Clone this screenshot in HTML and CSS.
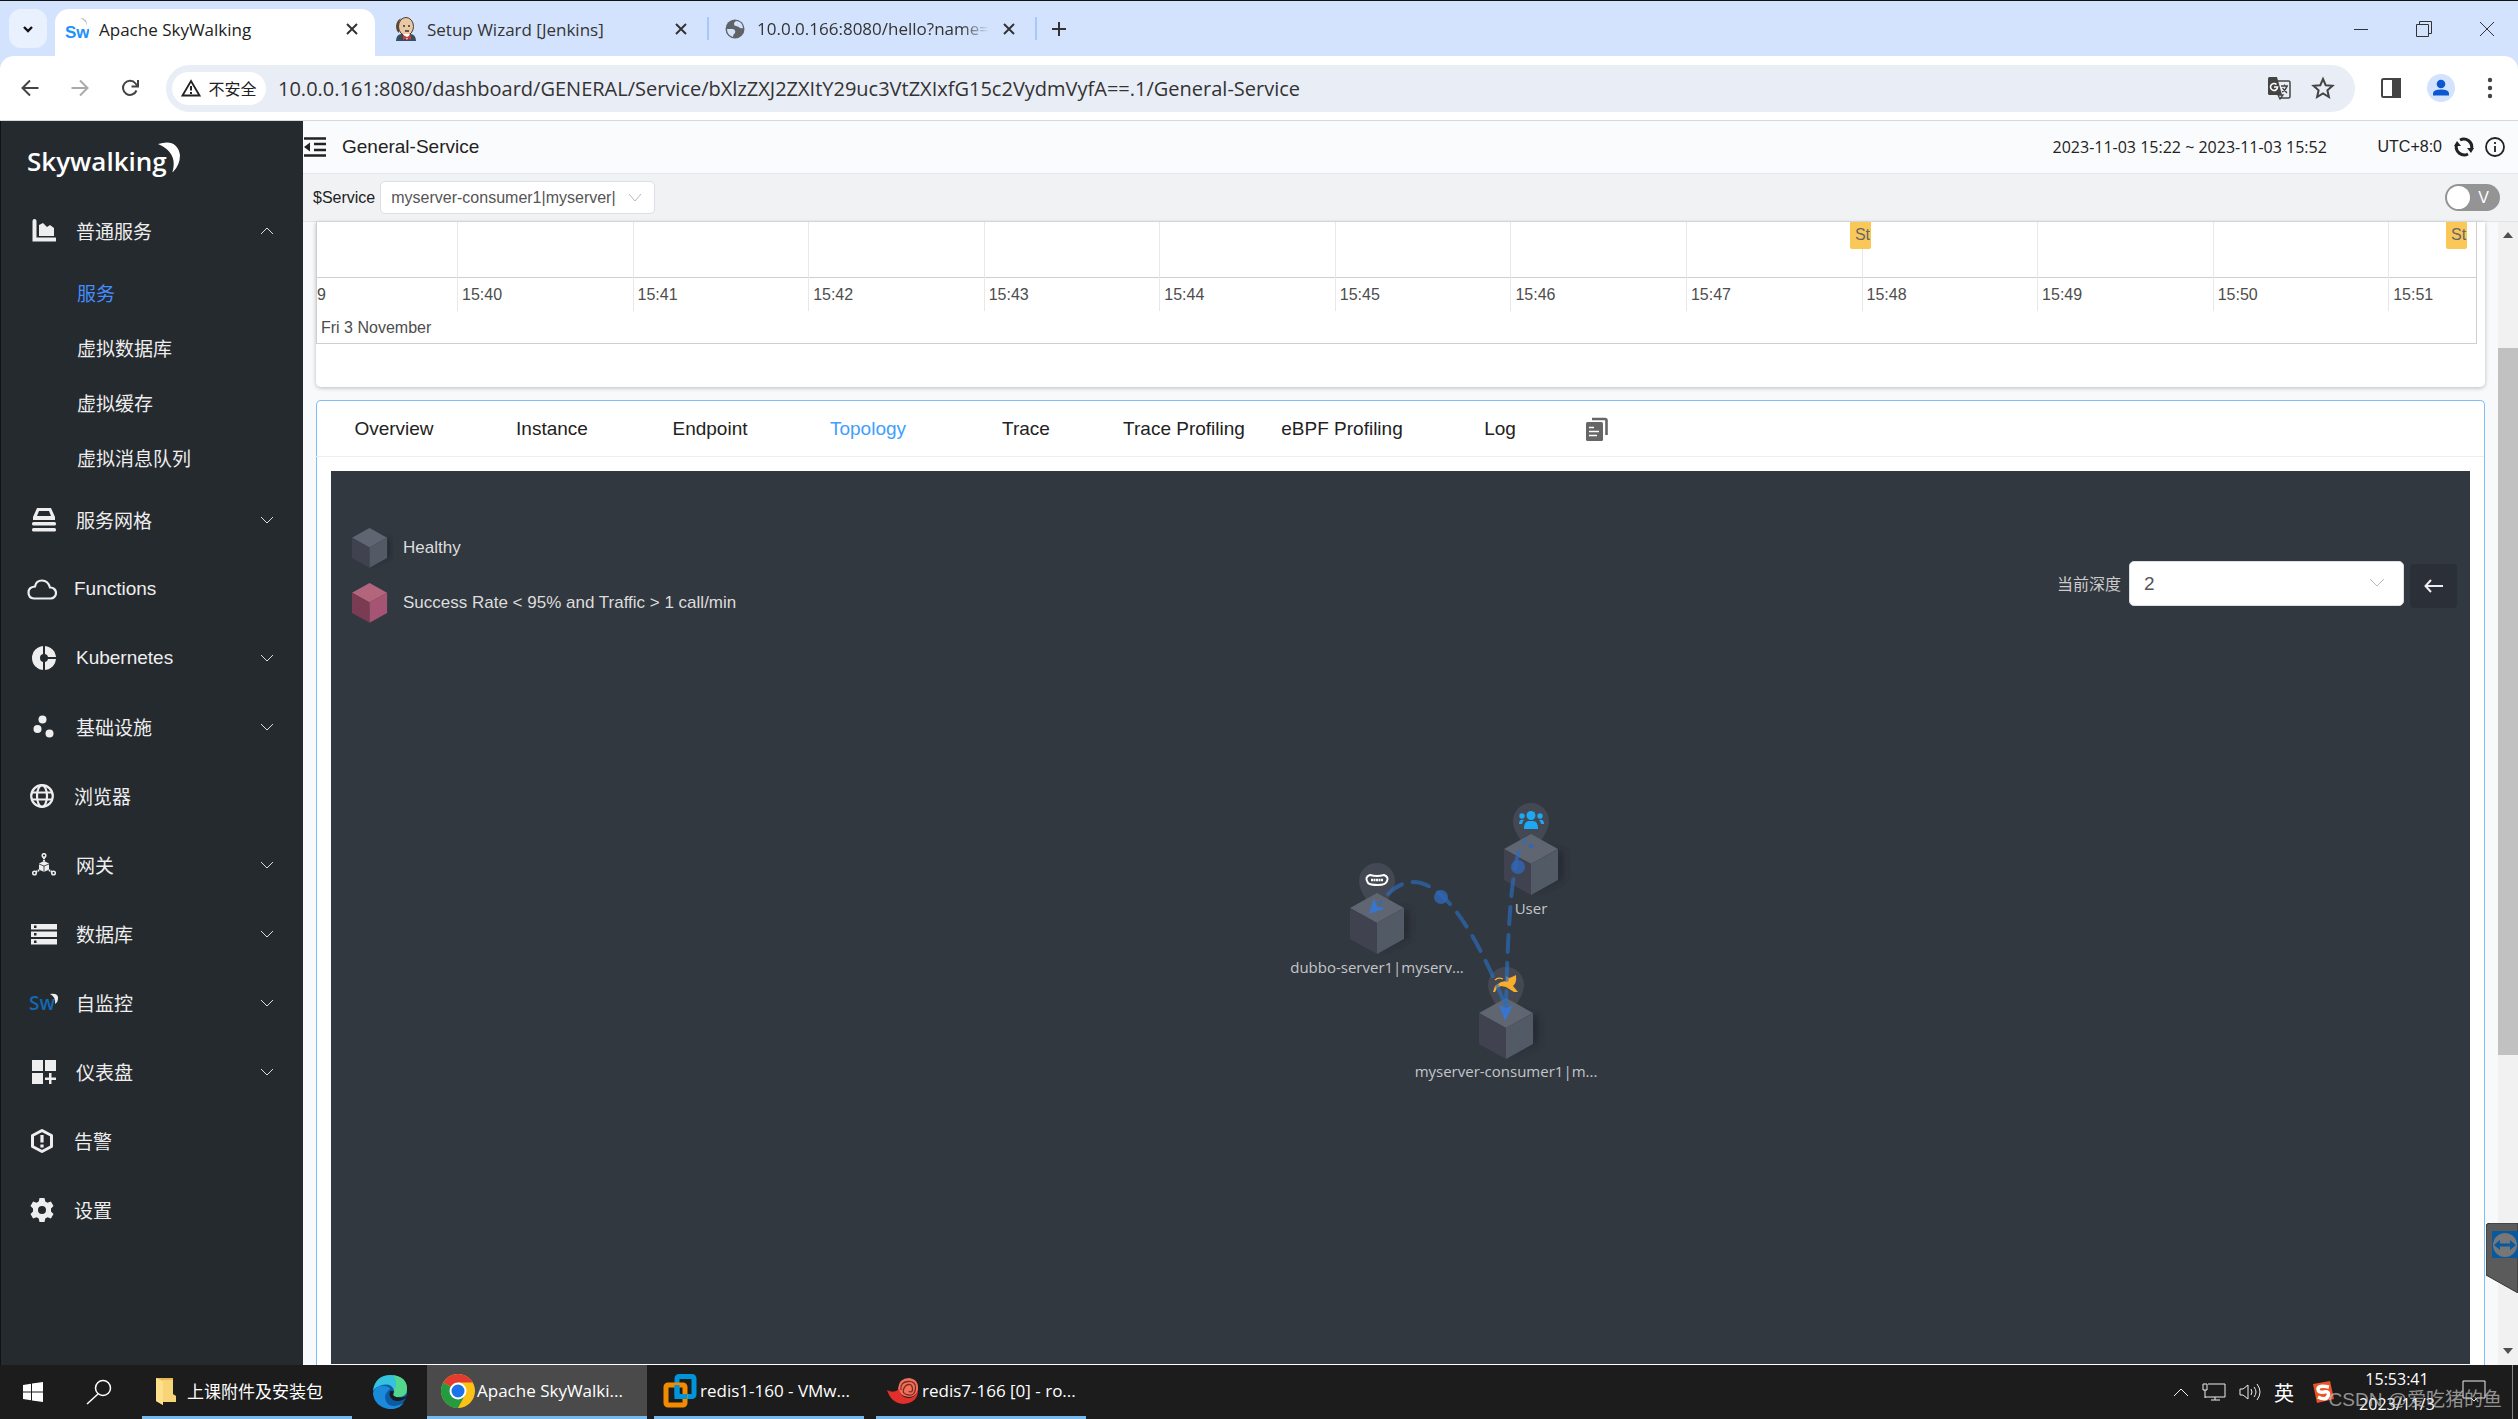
FILE: index.html
```html
<!DOCTYPE html>
<html lang="zh-CN">
<head>
  <meta charset="UTF-8">
  <meta name="viewport" content="width=device-width, initial-scale=1.0">
  <title>Apache SkyWalking</title>
  <link rel="stylesheet" href="styles.css">
</head>
<body>
  <!-- Browser tabs -->
  <div class="tab-strip">
    <button class="tab-search" aria-label="Search tabs"><svg width="14" height="14" viewBox="0 0 14 14"><path d="M3 5l4 4 4-4" fill="none" stroke="#111" stroke-width="2.4"/></svg></button>
    <div class="tab active">
      <svg width="24" height="24" viewBox="0 0 24 24"><text x="0" y="21" class="sw-text" fill="#1e90ff">Sw</text><path d="M15 1q8 0 7 9 0-6-7-9z" fill="#bbb"/></svg>
      <span class="tab-title">Apache SkyWalking</span>
      <button class="tab-close" aria-label="Close tab"><svg width="12" height="12" viewBox="0 0 12 12"><path d="M1 1l10 10M11 1L1 11"/></svg></button>
    </div>
    <div class="tab">
      <svg width="22" height="24" viewBox="0 0 22 24"><path d="M1 24q0-6 5-7l10 0q5 1 5 7z" fill="#33505f"/><ellipse cx="11" cy="9.500" rx="7.500" ry="9" fill="#e8c9a4" stroke="#4b3a2c"/><path d="M4 12q-1-9 3-11-5 1-6 8 0 5 3 7z" fill="#5a4534"/><path d="M8 9h2M13 9h2M10 14h4" stroke="#333" stroke-width="1.300"/><path d="M8 17l7 0-3 6z" fill="#fff"/><path d="M8 18l4 2 4-2v5l-4-2-4 2z" fill="#d33"/></svg>
      <span class="tab-title">Setup Wizard [Jenkins]</span>
      <button class="tab-close" aria-label="Close tab"><svg width="12" height="12" viewBox="0 0 12 12"><path d="M1 1l10 10M11 1L1 11"/></svg></button>
    </div>
    <div class="tab">
      <svg width="20" height="20" viewBox="0 0 20 20"><circle cx="10" cy="10" r="9.500" fill="#5f6368"/><path d="M11 2q6 0 7 7-3 1-4-1l-3-1q-2 0-2-2 0-2 2-3zM2 10l6 0q3 1 2 4-2 1-2 4-6-2-6-8z" fill="#d3e3fd"/></svg>
      <span class="tab-title fade">10.0.0.166:8080/hello?name=</span>
      <button class="tab-close" aria-label="Close tab"><svg width="12" height="12" viewBox="0 0 12 12"><path d="M1 1l10 10M11 1L1 11"/></svg></button>
    </div>
    <button class="tab-new" aria-label="New tab"><svg width="14" height="14" viewBox="0 0 14 14"><path d="M7 0v14M0 7h14" stroke="#333" stroke-width="2"/></svg></button>
    <div class="window-buttons">
      <button aria-label="Minimize"><svg width="16" height="16" viewBox="0 0 16 16"><path d="M1 8.500h14"/></svg></button>
      <button aria-label="Restore"><svg width="16" height="16" viewBox="0 0 16 16"><path d="M.5 3.500h12v12h-12zM3.500 3V.5h12v12H13"/></svg></button>
      <button aria-label="Close"><svg width="16" height="16" viewBox="0 0 16 16"><path d="M1 1l14 14M15 1L1 15"/></svg></button>
    </div>
  </div>

  <!-- Address bar -->
  <div class="toolbar">
    <button aria-label="Back"><svg width="18" height="18" viewBox="0 0 18 18"><path d="M17.500 9H2M9 1.500L1.500 9 9 16.500"/></svg></button>
    <button aria-label="Forward" class="off"><svg width="18" height="18" viewBox="0 0 18 18"><path d="M.5 9H16M9 1.500L16.500 9 9 16.500"/></svg></button>
    <button aria-label="Reload"><svg width="18" height="18" viewBox="0 0 18 18"><path d="M15.500 11.500A7 7 0 1 1 14.500 4.500L16.500 7M17 1v6.500h-6.500"/></svg></button>
    <div class="omnibox">
      <button class="site-chip"><svg width="20" height="18" viewBox="0 0 20 18"><path d="M10 2L18.500 16.500h-17z" fill="none" stroke="#222" stroke-width="1.800"/><path d="M10 7v4.500M10 13v2" stroke="#222" stroke-width="2"/></svg>不安全</button>
      <input class="url" type="text" aria-label="Address" value="10.0.0.161:8080/dashboard/GENERAL/Service/bXlzZXJ2ZXItY29uc3VtZXIxfG15c2VydmVyfA==.1/General-Service">
      <button aria-label="Translate"><svg width="24" height="24" viewBox="0 0 24 24"><path d="M10 5h11.500q1.500 0 1.500 1.500v14q0 1.500-1.500 1.500H13" fill="none" stroke="#444" stroke-width="1.500"/><path d="M2.500 1H10l5 18H2.500Q1 19 1 17.500v-15Q1 1 2.500 1z" fill="#444"/><path d="M9.500 8.500A3.500 3.500 0 1 0 10.500 11H7" fill="none" stroke="#fff" stroke-width="1.600"/><path d="M14 10h7M17.500 8.500V10M20 10q-1 4-5 6M15.500 12l4.500 5M11 19l5 0-3 4z" fill="none" stroke="#444" stroke-width="1.300"/></svg></button>
      <button aria-label="Bookmark"><svg width="24" height="24" viewBox="0 0 24 24"><path d="M12 3l2.700 6.200 6.800.6-5.100 4.500 1.500 6.700-5.900-3.600-5.900 3.600 1.500-6.700L2.500 9.800l6.800-.6z" fill="none" stroke="#444" stroke-width="2"/></svg></button>
    </div>
    <button aria-label="Side panel" class="side-btn"><svg width="20" height="20" viewBox="0 0 20 20"><rect x="1" y="1" width="18" height="18" rx="1.500" fill="#fff" stroke="#444" stroke-width="2"/><path d="M12 1h7v18h-7z" fill="#444"/></svg></button>
    <button aria-label="Profile" class="profile"><svg width="28" height="28" viewBox="0 0 28 28"><circle cx="14" cy="14" r="14" fill="#d3e3fd"/><circle cx="14" cy="10" r="4.300" fill="#0b57d0"/><path d="M6 21.500v-2q0-4 8-4t8 4v2z" fill="#0b57d0"/></svg></button>
    <button aria-label="Menu" class="kebab"><svg width="6" height="22" viewBox="0 0 6 22"><circle cx="3" cy="3" r="2.200"/><circle cx="3" cy="11" r="2.200"/><circle cx="3" cy="19" r="2.200"/></svg></button>
  </div>

  <div class="app">
    <!-- Side menu -->
    <nav class="sidebar">
      <div class="logo">
        <svg width="160" height="50" viewBox="0 0 160 50"><text x="0" y="30" class="logo-text">Skywalking</text><path d="M131 3Q150-3 153 14q0 10-7 17-1 0 0-2 4-18-15-26z" fill="#fff"/></svg>
      </div>
      <a href="#" class="item">
        <svg viewBox="0 0 24 24"><path d="M2.500 2v18.500H23" fill="none" stroke="#eee" stroke-width="4" stroke-linecap="round"/><path d="M7 17V6l4-2 4 4 3-2 4 3v8z"/></svg>
        普通服务<svg class="arrow" viewBox="0 0 14 8"><path d="M1 7l6-6 6 6"/></svg></a>
      <a href="#" class="sub current">服务</a>
      <a href="#" class="sub">虚拟数据库</a>
      <a href="#" class="sub">虚拟缓存</a>
      <a href="#" class="sub">虚拟消息队列</a>
      <a href="#" class="item">
        <svg viewBox="0 0 24 24"><path d="M5 0h14l4 9v3H1V9zM7 3L5 8h14l-2-5z" fill-rule="evenodd"/><rect x="0" y="14" width="24" height="3.500" rx="1.500"/><rect x="0" y="20" width="24" height="3.500" rx="1.500"/></svg>
        服务网格<svg class="arrow" viewBox="0 0 14 8"><path d="M1 1l6 6 6-6"/></svg></a>
      <a href="#" class="item single">
        <svg class="wide" viewBox="0 0 30 24"><path d="M7 21.500h16.500a5.500 5.500 0 0 0 0-11h-.5Q21 3.500 15 3.500T8 9.500Q1.500 10 1.500 15.500 1.500 21 7 21.500z" fill="none" stroke="#eee" stroke-width="2.200"/></svg>
        Functions</a>
      <a href="#" class="item">
        <svg viewBox="0 0 24 24"><circle cx="12" cy="12" r="12"/><path d="M12 0v24M12 12h12" stroke="#252a2f" stroke-width="2"/><circle cx="12" cy="12" r="4" fill="#252a2f"/></svg>
        Kubernetes<svg class="arrow" viewBox="0 0 14 8"><path d="M1 1l6 6 6-6"/></svg></a>
      <a href="#" class="item">
        <svg viewBox="0 0 24 24"><circle cx="10.500" cy="4.500" r="4"/><circle cx="5.500" cy="14" r="4"/><circle cx="17.500" cy="18.500" r="4"/></svg>
        基础设施<svg class="arrow" viewBox="0 0 14 8"><path d="M1 1l6 6 6-6"/></svg></a>
      <a href="#" class="item single">
        <svg viewBox="0 0 24 24"><g fill="none" stroke="#eee" stroke-width="2.200"><circle cx="12" cy="12" r="10.800"/><ellipse cx="12" cy="12" rx="5" ry="10.800"/><path d="M2 8.500h20M2 15.500h20"/></g></svg>
        浏览器</a>
      <a href="#" class="item">
        <svg viewBox="0 0 24 24"><path d="M12 8l5 2.500v6L12 19l-5-2.500v-6z"/><path d="M7 11l5 2 5-2M12 13v6" fill="none" stroke="#252a2f" stroke-width=".8"/><g fill="none" stroke="#eee" stroke-width="1.500"><circle cx="12" cy="2.500" r="1.800"/><circle cx="2.500" cy="20" r="1.800"/><circle cx="21.500" cy="20" r="1.800"/><path d="M12 4.500V8M4 19l4-2.500M20 19l-4-2.500" stroke-width="2" stroke-dasharray="1.500 .7"/></g></svg>
        网关<svg class="arrow" viewBox="0 0 14 8"><path d="M1 1l6 6 6-6"/></svg></a>
      <a href="#" class="item">
        <svg class="mid" viewBox="0 0 26 24"><path d="M0 2h26v5.500H0zM0 9.500h26V15H0zM0 17h26v5.500H0z"/><path d="M3 3.500h2.500V6H3zM3 11h2.500v2.500H3zM3 18.500h2.500V21H3z" fill="#252a2f"/></svg>
        数据库<svg class="arrow" viewBox="0 0 14 8"><path d="M1 1l6 6 6-6"/></svg></a>
      <a href="#" class="item">
        <svg class="wide" viewBox="0 0 30 24"><text x="0" y="19" class="sw-menu">Sw</text><path d="M21 3q9-1 8 5 0 3-3 5 1-7-5-10z"/></svg>
        自监控<svg class="arrow" viewBox="0 0 14 8"><path d="M1 1l6 6 6-6"/></svg></a>
      <a href="#" class="item">
        <svg viewBox="0 0 24 24"><path d="M0 0h11v11H0zM13 0h11v11H13zM0 13h11v11H0zM17 13h2.500v4.500H24V20h-4.500v4H17v-4h-4v-2.500h4z"/></svg>
        仪表盘<svg class="arrow" viewBox="0 0 14 8"><path d="M1 1l6 6 6-6"/></svg></a>
      <a href="#" class="item single">
        <svg viewBox="0 0 24 24"><path d="M12 1.500l9.500 5v11l-9.500 5-9.500-5v-11z" fill="none" stroke="#eee" stroke-width="3" stroke-linejoin="round"/><path d="M12 6v7.500M12 15.500v3" stroke="#eee" stroke-width="3.200"/></svg>
        告警</a>
      <a href="#" class="item single">
        <svg viewBox="0 0 24 24"><path d="M9.500 0h5l.8 3.600 2.200 1.200 3.400-1.200 2.600 4.300L21 10.500v3l2.500 2.600-2.600 4.300-3.400-1.200-2.200 1.200-.8 3.600h-5l-.8-3.600-2.200-1.200-3.400 1.200L.5 16.100 3 13.500v-3L.5 7.900l2.600-4.300 3.400 1.200 2.200-1.200zM12 8a4 4 0 1 0 0 8 4 4 0 0 0 0-8z" fill-rule="evenodd"/></svg>
        设置</a>
    </nav>

    <main class="main">
      <header class="app-header">
        <button aria-label="Collapse menu"><svg width="22" height="20" viewBox="0 0 22 20"><path d="M0 1.500h22M10 7h12M10 13h12M0 18.500h22" stroke="#222" stroke-width="2.600"/><path d="M0 10l6-4.500v9z" fill="#222"/></svg></button>
        <h1>General-Service</h1>
        <input class="time-range" type="text" aria-label="Time range" value="2023-11-03 15:22 ~ 2023-11-03 15:52">
        <span class="utc">UTC+8:0</span>
        <button aria-label="Refresh" class="refresh"><svg width="20" height="20" viewBox="0 0 20 20"><g fill="none" stroke="#222" stroke-width="3"><path d="M6 3A8 8 0 0 1 17.500 12"/><path d="M14 17A8 8 0 0 1 2.500 8"/></g><path d="M13 11h7l-3 5zM0 9l3-5 4 5z" fill="#222"/></svg></button>
        <button aria-label="About"><svg width="20" height="20" viewBox="0 0 20 20"><circle cx="10" cy="10" r="9" fill="none" stroke="#222" stroke-width="1.800"/><path d="M10 5v2M10 9v6" stroke="#222" stroke-width="1.800"/></svg></button>
      </header>

      <div class="filters">
        <label for="service">$Service</label>
        <div class="select-box service-box">
          <select id="service"><option>myserver-consumer1|myserver|</option></select>
          <svg width="14" height="10" viewBox="0 0 14 10"><path d="M1 1l6 7 6-7"/></svg>
        </div>
        <label class="switch"><input type="checkbox" aria-label="View mode"><span>V</span></label>
      </div>

      <div class="board">
        <div class="cards">
          <section class="card event-card">
            <div class="timeline">
              <div class="ticks">
                <span class="first">9</span><span>15:40</span><span>15:41</span><span>15:42</span><span>15:43</span><span>15:44</span><span>15:45</span><span>15:46</span><span>15:47</span><span>15:48</span><span>15:49</span><span>15:50</span><span>15:51</span>
              </div>
              <p>Fri 3 November</p>
              <span class="event event-a">St</span>
              <span class="event event-b">St</span>
            </div>
          </section>

          <section class="card tab-card">
            <div class="tabs">
              <button>Overview</button>
              <button>Instance</button>
              <button>Endpoint</button>
              <button class="active">Topology</button>
              <button>Trace</button>
              <button>Trace Profiling</button>
              <button>eBPF Profiling</button>
              <button>Log</button>
              <button class="copy" aria-label="Copy"><svg width="22" height="24" viewBox="0 0 22 24"><path d="M6 2h13q1.500 0 1.500 1.500V18" fill="none" stroke="#666" stroke-width="2.600"/><path d="M1.500 5h14q1.500 0 1.500 1.500v16q0 1.500-1.500 1.500h-14Q0 24 0 22.500v-16Q0 5 1.500 5z" fill="#666"/><path d="M3 10.500h5M3 14.500h10M3 18.500h8" stroke="#fff" stroke-width="1.600"/></svg></button>
            </div>

            <div class="topology">
              <ul class="legend">
                <li><svg width="42" height="40" viewBox="0 0 42 40"><use href="#cube" transform="scale(.65)"/></svg>Healthy</li>
                <li><svg width="42" height="40" viewBox="0 0 42 40"><g transform="scale(.65)"><path d="M27 0l27 15-27 15L0 15z" fill="#b3657c"/><path d="M0 15l27 15v31L0 46z" fill="#7b3b52"/><path d="M54 15L27 30v31l27-15z" fill="#a55573"/></g></svg>Success Rate &lt; 95% and Traffic &gt; 1 call/min</li>
              </ul>

              <div class="depth">
                <label for="depth">当前深度</label>
                <div class="select-box depth-box">
                  <select id="depth"><option>2</option></select>
                  <svg width="16" height="10" viewBox="0 0 16 10"><path d="M1 1l7 7 7-7"/></svg>
                </div>
                <button aria-label="Back to list"><svg width="20" height="14" viewBox="0 0 20 14"><path d="M19 7H2M7 1L1.500 7 7 13" fill="none" stroke="#eee" stroke-width="2"/></svg></button>
              </div>

              <!-- Service map -->
              <svg class="graph" width="380" height="320" viewBox="0 0 380 320">
                <defs>
                  <filter id="soft" x="-50%" y="-50%" width="200%" height="200%"><feGaussianBlur stdDeviation="3"/></filter>
                  <g id="cube">
                    <path d="M34 14l26 3v28l-28 12z" fill="#22262d" opacity=".7" filter="url(#soft)"/>
                    <path d="M27 0l27 15-27 15L0 15z" fill="#5f6672"/>
                    <path d="M0 15l27 15v31L0 46z" fill="#404250"/>
                    <path d="M54 15L27 30v31l27-15z" fill="#515a65"/>
                  </g>
                  <path id="pin" d="M0 32Q-18 12-18 0a18 18 0 0 1 36 0q0 12-18 32z" fill="#444852"/>
                </defs>
                <use href="#pin" x="117" y="101"/>
                <use href="#cube" x="90" y="113"/>
                <use href="#pin" x="271" y="41"/>
                <use href="#cube" x="244" y="54"/>
                <use href="#pin" x="246" y="205"/>
                <use href="#cube" x="219" y="218"/>
                <path d="M110 95q7 2 14 0 5 2 3 6-1 4-9 4t-10-2q-4-6 2-8z" fill="none" stroke="#fff" stroke-width="2"/>
                <path d="M111 100h12" stroke="#fff" stroke-width="2.500" stroke-dasharray="2 .5"/>
                <g fill="#1da8f2">
                  <circle cx="271" cy="35.500" r="4.500"/><circle cx="262" cy="36" r="2.700"/><circle cx="280" cy="36" r="2.700"/>
                  <path d="M264 49q0-8 5-8h4q5 0 5 8zM259 44q0-5 5-4-2 2-2 4zM284 44q0-5-5-4 2 2 2 4z"/>
                </g>
                <path d="M246 196l3 2 3-1 4-2q1 8-3 11l5 6h-4l-8-5-5-1-4 2-2 4h-2l2-6 6-4 5-1z" fill="#f9ae2b"/>
                <path d="M235 200q3-3 8-1" fill="none" stroke="#f9ae2b" stroke-width="1.300"/>
                <g fill="none" stroke="#2a6dc0" stroke-opacity=".65" stroke-width="4" stroke-linecap="round" stroke-dasharray="17 11">
                  <path d="M244 222Q174 52 120 123"/>
                  <path d="M246 228Q249 71 265 61"/>
                </g>
                <path d="M109 134l5-16 3 9 9 1zM245 241l-6-16 7 3 7-3z" fill="#3676cf"/>
                <g fill="#2f67b5" fill-opacity=".8"><circle cx="181" cy="117" r="7"/><circle cx="258" cy="87" r="7"/><circle cx="271" cy="66" r="2.500"/></g>
                <g class="node-label">
                  <text x="117" y="193">dubbo-server1|myserv...</text>
                  <text x="271" y="134">User</text>
                  <text x="246" y="297">myserver-consumer1|m...</text>
                </g>
              </svg>
            </div>
          </section>
        </div>
        <div class="scrollbar">
          <svg width="10" height="6" viewBox="0 0 10 6"><path d="M5 0l5 6H0z"/></svg>
          <div class="thumb"></div>
          <svg width="10" height="6" viewBox="0 0 10 6"><path d="M5 6L0 0h10z"/></svg>
        </div>
      </div>
    </main>
  </div>

  <!-- TeamViewer side handle -->
  <svg class="remote-handle" width="32" height="70" viewBox="0 0 32 70"><path d="M4 0h28v70L0 52V4Q0 0 4 0z" fill="#5b5b5b" stroke="#333"/><path d="M6 8h26v27H6z" fill="#08599d"/><circle cx="19" cy="22" r="12" fill="#777"/><path d="M8 22l6-5v3.500h10V17l6 5-6 5v-3.500H14V27z" fill="#08599d"/></svg>

  <!-- Windows taskbar -->
  <footer class="taskbar">
    <button class="start" aria-label="Start"><svg width="20" height="20" viewBox="0 0 20 20" fill="#fff"><path d="M0 3l8-1.200v7.700H0zM9 1.600L20 0v9.500H9zM0 10.500h8v7.700L0 17zM9 10.500h11V20L9 18.400z"/></svg></button>
    <button class="search" aria-label="Search"><svg width="26" height="26" viewBox="0 0 26 26" fill="none" stroke="#fff" stroke-width="1.500"><circle cx="17" cy="9" r="7.500"/><path d="M12 15L1 25"/></svg></button>
    <button class="task folder"><svg width="20" height="28" viewBox="0 0 20 28"><path d="M0 1h17v16l3 2v6H7v3L0 24z" fill="#e9b94f"/><path d="M0 1l7 3v24l-7-4z" fill="#ffe08a"/><path d="M7 3h10v15l3 1v6H7z" fill="#f6d477"/></svg>上课附件及安装包</button>
    <button class="edge" aria-label="Edge"><svg width="34" height="34" viewBox="0 0 34 34"><circle cx="17" cy="17" r="17" fill="#0c59a4"/><path d="M0 16Q2 0 18 0q16 1 16 14 0 8-9 8-4 0-5-2 2-2 1-5Q18 8 9 10 2 12 0 16z" fill="#35c1e0"/><path d="M20 0q14 2 14 14 0 8-9 8-4 0-5-2 2-2 1-5 5-7-1-15z" fill="#5fdc70" opacity=".75"/><path d="M0 18Q3 9 12 11q5 1 5 3-8 6-3 14 5 6 17 0-6 7-15 6Q1 31 0 18z" fill="#1b8ad8"/><path d="M34 22q-7 6-14 3-5-4-3-9l4 0q-2 3 0 5 5 3 13 0z" fill="#1c1c1c"/></svg></button>
    <button class="task on"><svg width="34" height="34" viewBox="0 0 34 34"><circle cx="17" cy="17" r="17" fill="#fbc116"/><path d="M17 17L2.300 8.500a17 17 0 0 1 29.400 0z" fill="#e33b2e"/><path d="M17 17L2.300 8.500A17 17 0 0 0 17 34l7-13z" fill="#249a41"/><path d="M17 8.500h14.700L24 21z" fill="#fbc116"/><circle cx="17" cy="17" r="8.500" fill="#fff"/><circle cx="17" cy="17" r="6.500" fill="#1a73e8"/></svg>Apache SkyWalki...</button>
    <button class="task"><svg width="34" height="34" viewBox="0 0 34 34" fill="none" stroke-width="5"><rect x="14" y="2.500" width="17" height="20" rx="2" stroke="#0095d9"/><rect x="3" y="11" width="19" height="20" rx="2" stroke="#f38b00"/><path d="M14 11v11.500h10" stroke="#0095d9"/></svg>redis1-160 - VMw...</button>
    <button class="task redis"><svg width="32" height="26" viewBox="0 0 32 26"><path d="M11 11Q12 0 22 0q10 1 9 12-2 7-9 7-9-1-11-8z" fill="#f0705a"/><path d="M0 12q7 4 12-1 2 9 10 9 6 0 9-8 0 13-15 14Q4 25 0 12z" fill="#e32f2b"/><path d="M14 12Q13 4 21 3.500t7.500 7-7 6.500-5-5.500 5-5 4 4-4 3" fill="none" stroke="#7c2a22" stroke-width="1.300"/></svg>redis7-166 [0] - ro...</button>
    <div class="tray">
      <svg width="16" height="10" viewBox="0 0 16 10"><path d="M1 9l7-7 7 7"/></svg>
      <svg width="24" height="18" viewBox="0 0 24 18"><path d="M6 1h17v13H3M1 1h4v6H1zM3 7v8M9 17h9M13 14v3"/></svg>
      <svg width="22" height="18" viewBox="0 0 22 18"><path d="M1 6h3l5-4v14l-5-4H1zM12 6q2 3 0 6M15 4q4 5 0 10M18 1q6 8 0 16"/></svg>
      <span class="ime">英</span>
      <svg class="sogou" width="22" height="22" viewBox="0 0 22 22"><path d="M1 3l17-3 4 18-17 4z" fill="#ee5324" stroke="none"/><path d="M17 6Q6 4 6 8t6 3 4 4-10 1" stroke="#fff" stroke-width="3.500"/></svg>
      <time class="clock">15:53:41<br>2023/11/3</time>
      <svg class="notice" width="24" height="22" viewBox="0 0 24 22"><path d="M1 1h22v17h-8l-3 3-3-3H1z"/></svg>
    </div>
    <div class="watermark">CSDN @爱吃猪的鱼</div>
  </footer>
</body>
</html>
```
FILE: styles.css
```css
* {
  box-sizing: border-box;
}
body {
  margin: 0;
  height: 100vh;
  display: flex;
  flex-direction: column;
  overflow: hidden;
  position: relative;
  font-family: "Liberation Sans", "Noto Sans CJK SC", sans-serif;
  font-size: 16px;
  color: #222;
  background-color: #d3e3fd;
}
button, input, select {
  font: inherit;
  color: inherit;
  border: none;
  background: none;
  padding: 0;
  margin: 0;
}
button {
  display: flex;
  align-items: center;
  justify-content: center;
  flex-shrink: 0;
}
svg {
  flex-shrink: 0;
}

/* browser */
.tab-strip {
  height: 56px;
  flex-shrink: 0;
  display: flex;
  align-items: flex-end;
  padding-left: 9px;
  border-top: 1px solid #111;
  font-family: "Open Sans", "Noto Sans CJK SC", sans-serif;
  font-size: 17px;
}
.tab-search {
  width: 38px;
  height: 39px;
  margin: 0 8px 8px 0;
  border-radius: 12px;
  background-color: #e9f1fe;
}
.tab {
  height: 47px;
  width: 332px;
  display: flex;
  align-items: center;
  padding: 0 20px 7px;
  color: #333;
}
.tab.active {
  width: 320px;
  padding: 0 17px 7px 10px;
  background-color: #fff;
  border-radius: 14px 14px 0 0;
  color: #222;
}
.tab + .tab + .tab {
  width: 330px;
  padding: 0 20px 0 16px;
  border-left: 2px solid #a8c7fa;
  border-right: 2px solid #a8c7fa;
  height: 23px;
  margin-bottom: 16px;
}
.tab-title {
  flex: 1;
  margin-left: 10px;
  white-space: nowrap;
  overflow: hidden;
}
.fade {
  margin: 0 14px 0 12px;
  mask-image: linear-gradient(to right, #000 88%, transparent);
}
.tab-close svg {
  stroke: #333;
  stroke-width: 2;
}
.tab-new {
  width: 44px;
  height: 55px;
}
.sw-text {
  font: bold 17px "Liberation Sans", sans-serif;
}
.window-buttons {
  margin-left: auto;
  display: flex;
  height: 55px;
}
.window-buttons button {
  width: 63px;
}
.window-buttons svg {
  fill: none;
  stroke: #333;
}
.toolbar {
  height: 65px;
  flex-shrink: 0;
  display: flex;
  align-items: center;
  padding: 0 25px 0 20px;
  background-color: #fff;
  border-bottom: 1px solid #d9d9d9;
  border-radius: 14px 14px 0 0;
}
.toolbar > button {
  width: 20px;
  margin-right: 30px;
}
.toolbar > button > svg {
  fill: none;
  stroke: #444;
  stroke-width: 2px;
}
.toolbar > button.off > svg {
  stroke: #aaa;
}
.omnibox {
  flex: 1;
  height: 47px;
  margin-right: 26px;
  margin-left: -4px;
  padding: 0 20px 0 6px;
  display: flex;
  align-items: center;
  border-radius: 24px;
  background-color: #e9edf6;
}
.omnibox button + button {
  margin-left: 20px;
}
.site-chip {
  height: 33px;
  width: 94px;
  gap: 7px;
  border-radius: 17px;
  background-color: #fff;
}
.url {
  flex: 1;
  margin-left: 12px;
  font-family: "Open Sans", sans-serif;
  font-size: 20px;
  color: #333;
}
.toolbar > .side-btn {
  margin-right: 26px;
}
.toolbar > .profile {
  width: 28px;
  margin-right: 32px;
}
.toolbar > .profile > svg,
.toolbar > .kebab > svg {
  stroke: none;
}
.toolbar > .kebab {
  width: 6px;
  margin-right: 0;
}
.toolbar > .kebab > svg {
  fill: #444;
}

/* side menu */
.app {
  flex: 1;
  min-height: 0;
  display: flex;
}
.sidebar {
  width: 303px;
  flex-shrink: 0;
  border-left: 1px solid #111;
  background-color: #252a2f;
}
.logo {
  height: 75px;
  padding: 20px 0 0 26px;
}
.logo-text {
  font: 600 26px "Open Sans", sans-serif;
  fill: #fff;
}
.item, .sub {
  display: flex;
  align-items: center;
  height: 69px;
  padding: 0 29px 0 30px;
  font-size: 19px;
  color: #eee;
  text-decoration: none;
}
.item > svg {
  width: 24px;
  height: 24px;
  margin: 0 20px 0 1px;
  fill: #eee;
}
.item > .mid {
  width: 26px;
  margin: 0 19px 0 0;
}
.item > .wide {
  width: 30px;
  margin: 0 17px 0 -2px;
}
.item.single {
  padding-left: 28px;
}
.item > .arrow {
  width: 14px;
  height: 8px;
  margin: 0 0 0 auto;
  fill: none;
  stroke: #ddd;
  stroke-width: 1px;
}
.sub {
  height: 55px;
  padding-left: 76px;
}
.sub.current {
  color: #448dfe;
}
.sw-menu {
  font: 600 19px "Open Sans", sans-serif;
  fill: #1368b4;
}

/* header */
.main {
  flex: 1;
  min-width: 0;
  display: flex;
  flex-direction: column;
  background-color: #f7f9fa;
}
.app-header {
  height: 53px;
  flex-shrink: 0;
  display: flex;
  align-items: center;
  padding: 0 13px 0 1px;
  background-color: #fafbfc;
  border-bottom: 1px solid #e4e8ec;
}
.app-header h1 {
  margin: 0 auto 0 16px;
  font-size: 19px;
  font-weight: normal;
}
.time-range {
  width: 290px;
  margin-right: 35px;
  font-family: "Open Sans", sans-serif;
}
.utc {
  margin-right: 12px;
}
.refresh {
  margin-right: 11px;
}
.filters {
  height: 48px;
  flex-shrink: 0;
  display: flex;
  align-items: center;
  padding: 0 18px 0 10px;
  background-color: #f0f2f4;
  border-bottom: 1px solid #dfe4e8;
}
.select-box {
  display: flex;
  align-items: center;
  position: relative;
  border: 1px solid #dcdfe6;
  border-radius: 5px;
  background-color: #fff;
  color: #555;
}
.select-box select {
  appearance: none;
  width: 100%;
  height: 100%;
  padding-left: 10px;
}
.select-box svg {
  position: absolute;
  right: 12px;
  fill: none;
  stroke: #b4b8c0;
  pointer-events: none;
}
.service-box {
  width: 275px;
  height: 33px;
  margin-left: 5px;
}
.switch {
  margin-left: auto;
  width: 55px;
  height: 27px;
  display: flex;
  align-items: center;
  justify-content: space-between;
  padding: 0 11px 0 2px;
  border-radius: 14px;
  background-color: #949494;
  color: #fff;
}
.switch input {
  appearance: none;
  width: 23px;
  height: 23px;
  border-radius: 50%;
  background-color: #fff;
}

/* dashboard */
.board {
  flex: 1;
  min-height: 0;
  display: flex;
}
.cards {
  flex: 1;
  min-width: 0;
  display: flex;
  flex-direction: column;
  padding: 0 13px 0 13px;
}
.card {
  background-color: #fff;
}
.event-card {
  padding: 0 8px 43px 0;
  margin-bottom: 13px;
  border-radius: 0 0 5px 5px;
  box-shadow: 0 1px 4px rgba(0, 0, 0, 0.25);
}
.timeline {
  position: relative;
  border: 1px solid #cfcfcf;
  border-top: none;
  color: #4d4d4d;
}
.ticks {
  display: grid;
  grid-template-columns: 140px repeat(11, 2fr) 1fr;
  background: linear-gradient(#cfcfcf, #cfcfcf) 0 55px / 100% 1px no-repeat;
}
.ticks span {
  height: 89px;
  padding: 63px 0 0 4px;
  line-height: 20px;
  border-left: 1px solid #e8e8e8;
}
.ticks .first {
  padding-left: 0;
  border-left: none;
}
.timeline p {
  margin: 0;
  padding: 7px 0 5px 4px;
  line-height: 20px;
}
.event {
  position: absolute;
  top: 0;
  width: 21px;
  height: 27px;
  padding-left: 5px;
  line-height: 25px;
  overflow: hidden;
  border-radius: 0 0 2px 2px;
  background-color: #fac858;
  color: #666;
}
.event-a {
  left: 71%;
}
.event-b {
  right: 9px;
}
.tab-card {
  flex: 1;
  min-height: 0;
  display: flex;
  flex-direction: column;
  border: 1px solid #7dbdf8;
  border-bottom: none;
  border-radius: 5px 5px 0 0;
}
.tabs {
  height: 56px;
  display: flex;
  flex-shrink: 0;
  margin-left: -2px;
  border-bottom: 1px solid #eee;
}
.tabs button {
  width: 158px;
  font-size: 19px;
}
.tabs .active {
  color: #409eff;
}
.tabs .copy {
  width: 36px;
}
.topology {
  flex: 1;
  min-height: 0;
  position: relative;
  display: flex;
  justify-content: space-between;
  align-items: flex-start;
  margin: 14px 14px 1px;
  background-color: #323840;
  overflow: hidden;
}
.legend {
  list-style: none;
  margin: 0;
  padding: 57px 0 0 21px;
  color: #ddd;
  font-size: 17px;
}
.legend li {
  display: flex;
  align-items: center;
  gap: 9px;
  height: 40px;
  margin-bottom: 15px;
}
.depth {
  display: flex;
  align-items: center;
  margin: 87px 13px 0 0;
  color: #ccc;
}
.depth-box {
  width: 275px;
  height: 45px;
  margin: 0 6px 0 8px;
  font-size: 19px;
}
.depth-box select {
  padding-left: 14px;
}
.depth-box svg {
  right: 18px;
}
.depth button {
  width: 47px;
  height: 44px;
  margin-top: 6px;
  border-radius: 4px;
  background-color: #2b2f38;
}
.graph {
  position: absolute;
  top: 309px;
  left: calc(50% - 141px);
}
.node-label {
  font: 15px "Open Sans", sans-serif;
  fill: #c4c6c9;
  text-anchor: middle;
}
.scrollbar {
  width: 20px;
  display: flex;
  flex-direction: column;
  align-items: center;
  padding: 10px 0 11px;
  background-color: #f1f1f1;
}
.scrollbar svg {
  fill: #505050;
}
.thumb {
  width: 20px;
  height: 63%;
  margin: 110px 0 auto;
  background-color: #c1c1c1;
}
.remote-handle {
  position: absolute;
  right: 0;
  bottom: 126px;
}

/* taskbar */
.taskbar {
  height: 54px;
  flex-shrink: 0;
  display: flex;
  position: relative;
  padding-right: 5px;
  background-color: #1c1c1c;
  color: #fff;
  font-family: "Open Sans", "Noto Sans CJK SC", sans-serif;
  font-size: 17px;
}
.start {
  width: 66px;
}
.search {
  width: 66px;
}
.task {
  width: 210px;
  margin-right: 12px;
  padding-left: 9px;
  gap: 3px;
  justify-content: flex-start;
  white-space: nowrap;
  border-bottom: 3px solid #76b9ed;
}
.task.folder {
  margin: 0 0 0 10px;
  padding-left: 14px;
  gap: 11px;
}
.task.on {
  width: 220px;
  margin-right: 7px;
  padding-left: 14px;
  gap: 2px;
  background-color: #4a4a4a;
}
.task.redis {
  padding-left: 11px;
}
.edge {
  width: 75px;
}
.tray {
  margin-left: auto;
  display: flex;
  align-items: center;
  gap: 13px;
  padding-right: 26px;
  border-right: 1px solid #888;
}
.tray svg {
  fill: none;
  stroke: #eee;
  stroke-width: 1px;
}
.ime {
  font-size: 20px;
}
.tray .sogou {
  margin-left: 5px;
}
.clock {
  width: 84px;
  margin: 0 10px 0 8px;
  text-align: center;
  font-size: 16px;
  line-height: 25px;
}
.tray .notice {
  margin-bottom: 2px;
}
.watermark {
  position: absolute;
  right: 16px;
  bottom: 4px;
  font-family: "Liberation Sans", "Noto Sans CJK SC", sans-serif;
  font-size: 19px;
  line-height: 30px;
  color: rgba(200, 200, 200, 0.7);
}
```
